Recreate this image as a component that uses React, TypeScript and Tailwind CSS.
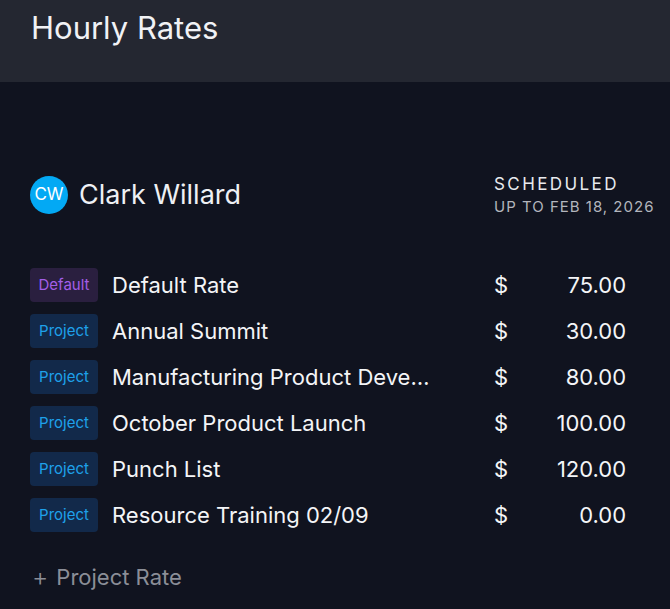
import React from "react";

const rows = [
  { tag: "Default", name: "Default Rate", amount: "75.00" },
  { tag: "Project", name: "Annual Summit", amount: "30.00" },
  { tag: "Project", name: "Manufacturing Product Development", amount: "80.00" },
  { tag: "Project", name: "October Product Launch", amount: "100.00" },
  { tag: "Project", name: "Punch List", amount: "120.00" },
  { tag: "Project", name: "Resource Training 02/09", amount: "0.00" },
];

export default function App() {
  return (
    <div
      className="w-[670px] h-[609px] bg-[#10131f] text-white overflow-hidden"
      style={{ fontFamily: "Inter, 'Noto Sans', sans-serif" }}
    >
      <div className="h-[82px] bg-[#242731] px-[31px] pt-[8px]">
        <h1 className="text-[31px] leading-[40px] font-normal text-[#f1f2f5]">Hourly Rates</h1>
      </div>
      <div className="px-[30px] pt-[94px]">
        <div className="flex items-start justify-between">
          <div className="flex items-center gap-[11px] h-[38px]">
            <div className="w-[38px] h-[38px] rounded-full bg-[#03a9f4] flex items-center justify-center text-[17px] text-white">
              CW
            </div>
            <div className="text-[27px] leading-[34px] text-[#eef0f4]">Clark Willard</div>
          </div>
          <div className="w-[146px] whitespace-nowrap -mt-[2px]">
            <div className="text-[17px] leading-[20px] tracking-[2.4px] text-[#e8eaee]">SCHEDULED</div>
            <div className="text-[15px] leading-[20px] tracking-[1px] text-[#b3b6bd] mt-[3px]">UP TO FEB 18, 2026</div>
          </div>
        </div>
        <div className="mt-[51px] flex flex-col gap-[12px]">
          {rows.map((r) => (
            <div key={r.name} className="flex items-center h-[34px]">
              <div
                className={
                  r.tag === "Default"
                    ? "w-[68px] h-[34px] shrink-0 rounded-[4px] bg-[#2a1f3f] text-[#a35ee8] text-[15px] flex items-center justify-center"
                    : "w-[68px] h-[34px] shrink-0 rounded-[4px] bg-[#12294a] text-[#1ea1ea] text-[15px] flex items-center justify-center"
                }
              >
                {r.tag}
              </div>
              <div className="ml-[14px] w-[320px] shrink-0 truncate text-[22px] leading-[30px] text-[#f4f5f7]">{r.name}</div>
              <div className="ml-[62px] text-[22px] text-[#f4f5f7]">$</div>
              <div className="w-[118px] text-right text-[22px] text-[#f4f5f7]">{r.amount}</div>
            </div>
          ))}
        </div>
        <div className="mt-[30px] flex items-center gap-[8px] text-[22px] leading-[30px] text-[#8b8e97] pl-[2px]">
          <span className="text-[25px] font-light">+</span>
          <span>Project Rate</span>
        </div>
      </div>
    </div>
  );
}
